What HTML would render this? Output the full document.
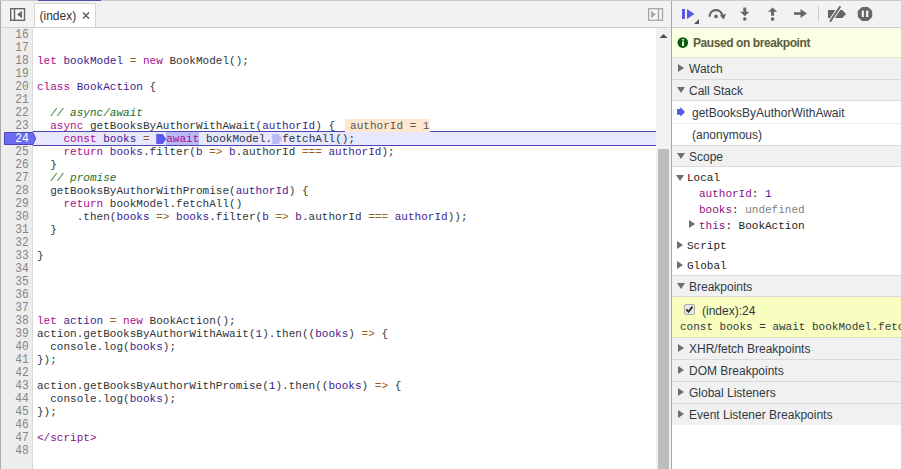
<!DOCTYPE html>
<html><head><meta charset="utf-8">
<style>
*{box-sizing:border-box;margin:0;padding:0}
html,body{width:901px;height:469px;overflow:hidden;background:#fff;font-family:"Liberation Sans",sans-serif;}
.abs{position:absolute}
#topline{left:0;top:0;width:901px;height:1px;background:#cacaca}
#topblue{left:38px;top:0;width:63px;height:1px;background:#4d53ac}
#leftb{left:0;top:0;width:1px;height:469px;background:#ababab}
#tb{left:1px;top:1px;width:670px;height:27px;background:#f2f2f2;border-bottom:1px solid #cdcdcd}
#tab{left:34px;top:3px;width:62px;height:24px;background:#fff;border:1px solid #d6d6d6;border-bottom:none}
#tabtxt{left:39.5px;top:9px;font-size:12px;color:#333}
#tabx{left:82px;top:8px;font-size:13px;color:#555}
#gutter{left:1px;top:28px;width:32px;height:441px;background:#ededed;border-right:1px solid #d8d8d8}
#code{left:37px;top:29px;letter-spacing:0.021px;font-family:"Liberation Mono",monospace;font-size:11px;line-height:13px;white-space:pre;color:#2f3337}
#nums{left:1px;top:29px;width:29px;font-family:"Liberation Mono",monospace;font-size:11px;line-height:12.2642px;transform:scaleY(1.06);transform-origin:0 0;text-align:right;color:#858585;white-space:pre}
#execline{left:33px;top:131px;width:623px;height:15px;background:#e7e7fd;border-top:1px solid #4c44b4;border-bottom:1px solid #4c44b4}
#execnum{left:4px;top:130px;width:29px;height:15px;background:#6b6bf0}
#sbtrack{left:656px;top:28px;width:15px;height:441px;background:#f1f1f1}
#sbthumb{left:658px;top:149px;width:11px;height:320px;background:#bdbdbd}
#divider{left:671px;top:0;width:1px;height:469px;background:#a8a8a8}
#side{left:671px;top:0;width:230px;height:469px;background:#fff}
.k{color:#aa0d91}.d{color:#3d2390}.o{color:#945c20}.aw{background:#b9b9f5;display:inline-block;height:13px;line-height:15px;vertical-align:top;position:relative;top:-1px}.iv{display:inline-block;margin-left:10px;padding-left:5px;background:#fde8cf;color:#575757;height:13px;line-height:15px;vertical-align:top;position:relative;top:-1px;z-index:2}.c{color:#236e25;font-style:italic}.n{color:#30188f}.t{color:#881280}
.sec{position:absolute;left:671px;width:230px;height:22px;background:#f1f1f1;border-bottom:1px solid #dadada;font-size:12px;color:#303942}
.sec .tri{position:absolute;left:7px;top:6px;width:0;height:0}
.sec .tri.td{top:7px;left:6px}
.tr{border-left:6.5px solid #6e6e6e;border-top:4px solid transparent;border-bottom:4px solid transparent}
.td{border-top:6px solid #6e6e6e;border-left:4px solid transparent;border-right:4px solid transparent}
.sec span{position:absolute;left:18px;top:4px}
.mk1{display:inline-block;width:10px;height:10px;vertical-align:top;margin-top:1px;background:#5a5af2;clip-path:polygon(0 0,65% 0,100% 50%,65% 100%,0 100%)}
.mk2{display:inline-block;width:10px;height:10px;vertical-align:top;margin-top:1px;background:#b9b9f6;clip-path:polygon(0 0,65% 0,100% 50%,65% 100%,0 100%)}
.mono{font-family:"Liberation Mono",monospace;font-size:11px}
</style></head><body>
<div class="abs" id="tb"></div>
<div class="abs" id="leftb"></div>
<div class="abs" id="tab"></div>
<div class="abs" id="tabtxt">(index)</div>
<svg class="abs" style="left:80px;top:10px" width="12" height="12"><path d="M3,2.5 L9,8.5 M9,2.5 L3,8.5" stroke="#5a5a5a" stroke-width="1.4" fill="none"/></svg>
<svg class="abs" style="left:0;top:0" width="670" height="27">
 <rect x="10.7" y="8.7" width="13.8" height="11.6" fill="#f9f9f9" stroke="#666" stroke-width="1.4"/>
 <line x1="14.5" y1="8.5" x2="14.5" y2="21" stroke="#666" stroke-width="1.5"/>
 <polygon points="17,14.5 22,10.8 22,18.2" fill="#666"/>
 <rect x="648.7" y="8.7" width="13.8" height="11.6" fill="#f9f9f9" stroke="#aaa" stroke-width="1.4"/>
 <line x1="658.5" y1="8.5" x2="658.5" y2="21" stroke="#aaa" stroke-width="1.5"/>
 <polygon points="651,10.8 651,18.2 656,14.5" fill="#aaa"/>
</svg>
<div class="abs" id="gutter"></div>
<div class="abs" id="sbtrack"></div>
<div class="abs" id="sbthumb"></div>
<svg class="abs" style="left:656px;top:28px" width="15" height="15"><polygon points="3.5,10 7.5,6 11.5,10" fill="#505050"/></svg>
<div class="abs" id="execline"></div>
<svg class="abs" style="left:0;top:131px" width="40" height="16"><polygon points="4.5,1.5 33,1.5 35.6,7.5 33,13.5 4.5,13.5" fill="#6b6bf5" stroke="#4d46bb" stroke-width="1"/></svg>
<svg class="abs" style="left:0;top:0" width="34" height="469" font-family="Liberation Mono" font-size="11.2" text-anchor="end"><g transform="scale(1,1.09)"><text x="28.6" y="34.862" fill="#858585">16</text><text x="28.6" y="46.789" fill="#858585">17</text><text x="28.6" y="58.716" fill="#858585">18</text><text x="28.6" y="70.642" fill="#858585">19</text><text x="28.6" y="82.569" fill="#858585">20</text><text x="28.6" y="94.495" fill="#858585">21</text><text x="28.6" y="106.422" fill="#858585">22</text><text x="28.6" y="118.349" fill="#858585">23</text><text x="28.6" y="130.275" fill="#fff">24</text><text x="28.6" y="142.202" fill="#858585">25</text><text x="28.6" y="154.128" fill="#858585">26</text><text x="28.6" y="166.055" fill="#858585">27</text><text x="28.6" y="177.982" fill="#858585">28</text><text x="28.6" y="189.908" fill="#858585">29</text><text x="28.6" y="201.835" fill="#858585">30</text><text x="28.6" y="213.761" fill="#858585">31</text><text x="28.6" y="225.688" fill="#858585">32</text><text x="28.6" y="237.615" fill="#858585">33</text><text x="28.6" y="249.541" fill="#858585">34</text><text x="28.6" y="261.468" fill="#858585">35</text><text x="28.6" y="273.394" fill="#858585">36</text><text x="28.6" y="285.321" fill="#858585">37</text><text x="28.6" y="297.248" fill="#858585">38</text><text x="28.6" y="309.174" fill="#858585">39</text><text x="28.6" y="321.101" fill="#858585">40</text><text x="28.6" y="333.028" fill="#858585">41</text><text x="28.6" y="344.954" fill="#858585">42</text><text x="28.6" y="356.881" fill="#858585">43</text><text x="28.6" y="368.807" fill="#858585">44</text><text x="28.6" y="380.734" fill="#858585">45</text><text x="28.6" y="392.661" fill="#858585">46</text><text x="28.6" y="404.587" fill="#858585">47</text><text x="28.6" y="416.514" fill="#858585">48</text></g></svg>
<div class="abs" id="code">

<span class="k">let</span> <span class="d">bookModel</span> <span class="o">=</span> <span class="k">new</span> BookModel();

<span class="k">class</span> <span class="d">BookAction</span> {

  <span class="c">// async/await</span>
  <span class="k">async</span> getBooksByAuthorWithAwait(<span class="d">authorId</span>) {<span class="iv">authorId = 1</span>
    <span class="k">const</span> <span class="d">books</span> <span class="o">=</span> <span class="mk1"></span><span class="k aw">await</span> bookModel.<span class="mk2"></span>fetchAll();
    <span class="k">return</span> <span class="d">books</span>.filter(<span class="d">b</span> <span class="o">=&gt;</span> <span class="d">b</span>.authorId <span class="o">===</span> <span class="d">authorId</span>);
  }
  <span class="c">// promise</span>
  getBooksByAuthorWithPromise(<span class="d">authorId</span>) {
    <span class="k">return</span> bookModel.fetchAll()
      .then(<span class="d">books</span> <span class="o">=&gt;</span> <span class="d">books</span>.filter(<span class="d">b</span> <span class="o">=&gt;</span> <span class="d">b</span>.authorId <span class="o">===</span> <span class="d">authorId</span>));
  }

}




<span class="k">let</span> <span class="d">action</span> <span class="o">=</span> <span class="k">new</span> BookAction();
action.getBooksByAuthorWithAwait(<span class="n">1</span>).then((<span class="d">books</span>) <span class="o">=&gt;</span> {
  console.log(<span class="d">books</span>);
});

action.getBooksByAuthorWithPromise(<span class="n">1</span>).then((<span class="d">books</span>) <span class="o">=&gt;</span> {
  console.log(<span class="d">books</span>);
});

<span class="t">&lt;/script&gt;</span>
</div>


<div class="abs" id="side"></div>
<div class="abs" style="left:671px;top:0;width:230px;height:28px;background:#f2f2f2;border-bottom:1px solid #cdcdcd"></div>
<svg class="abs" style="left:671px;top:0" width="230" height="27">
 <g fill="#5a5ae8">
  <rect x="11" y="9" width="3" height="10"/>
  <polygon points="16,9 23.5,14 16,19"/>
 </g>
 <polygon points="23,24 28,19 28,24" fill="#555"/>
 <g fill="#666">
  <path d="M38.6,16.8 A6.4,6.4 0 0 1 51.2,15" fill="none" stroke="#666" stroke-width="2.3"/>
  <polygon points="48.8,15.6 55,13.8 52.8,19.6"/>
  <circle cx="45" cy="16.4" r="1.85"/>
  <rect x="72.3" y="7.6" width="3" height="5"/>
  <polygon points="69.2,11.8 78.4,11.8 73.8,16.2"/>
  <circle cx="73.8" cy="19" r="1.8"/>
  <polygon points="97,11.8 106.3,11.8 101.6,7.4"/>
  <rect x="100.1" y="11" width="3" height="4.8"/>
  <circle cx="101.6" cy="19.1" r="1.8"/>
  <rect x="123" y="12.2" width="8" height="2.6"/>
  <polygon points="129.5,9 136,13.5 129.5,18"/>
 </g>
 <rect x="147" y="6" width="1" height="16" fill="#cfcfcf"/>
 <g fill="#666">
  <polygon points="157,10 171.3,10 175,14 171.3,18 157,18"/>
 </g>
 <line x1="159" y1="21.6" x2="169.4" y2="6.2" stroke="#f2f2f2" stroke-width="4"/>
 <line x1="159" y1="21.6" x2="169.4" y2="6.2" stroke="#666" stroke-width="1.9"/>
 <polygon points="191,6.9 197,6.9 201.2,11.1 201.2,16.9 197,21.1 191,21.1 186.8,16.9 186.8,11.1" fill="#666"/>
 <rect x="190.8" y="10.6" width="2" height="6.4" fill="#fff"/>
 <rect x="195.2" y="10.6" width="2" height="6.4" fill="#fff"/>
</svg>
<div class="abs" style="left:671px;top:28px;width:230px;height:30px;background:#fbffe3;border-bottom:1px solid #e0e2cc"></div>
<svg class="abs" style="left:671px;top:29px" width="30" height="30"><circle cx="11.8" cy="13.6" r="5.3" fill="#0b5b0b"/><rect x="11.1" y="12.5" width="1.8" height="4.5" fill="#fff"/><rect x="11.1" y="10" width="1.8" height="1.6" fill="#fff"/></svg>
<div class="abs" style="left:693px;top:36px;font-size:12px;font-weight:bold;letter-spacing:-0.42px;color:#5b5b3d">Paused on breakpoint</div>

<div class="sec" style="top:58px"><i class="tri tr"></i><span>Watch</span></div>
<div class="sec" style="top:80px;height:21px"><i class="tri td"></i><span>Call Stack</span></div>
<div class="abs" style="left:671px;top:101px;width:230px;height:23px;border-bottom:1px solid #ececec"></div>
<svg class="abs" style="left:671px;top:102px" width="20" height="22"><polygon points="6,7 9.3,7 9.3,5 14,9.9 9.3,14.7 9.3,12.8 6,12.8" fill="#5757e6"/></svg>
<div class="abs" style="left:692px;top:106px;font-size:12px;color:#303942">getBooksByAuthorWithAwait</div>
<div class="abs" style="left:671px;top:124px;width:230px;height:22px;border-bottom:1px solid #dadada"></div>
<div class="abs" style="left:692px;top:128px;font-size:12px;color:#303942">(anonymous)</div>
<div class="sec" style="top:146px;height:21px"><i class="tri td"></i><span>Scope</span></div>

<div class="abs mono" style="left:670px;top:168px;width:230px;line-height:16px;color:#222">
<i class="abs td" style="left:6px;top:7px"></i><div class="abs" style="left:17px;top:2px;white-space:pre">Local</div>
<div class="abs" style="left:29px;top:18px;white-space:pre"><span class="t">authorId</span>: <span class="n">1</span></div>
<div class="abs" style="left:29px;top:34px;white-space:pre"><span class="t">books</span>: <span style="color:#808080">undefined</span></div>
<i class="abs tr" style="left:19px;top:52px"></i><div class="abs" style="left:29px;top:50px;white-space:pre"><span class="t">this</span>: BookAction</div>
<i class="abs tr" style="left:7px;top:73px"></i><div class="abs" style="left:17px;top:70px;white-space:pre">Script</div>
<i class="abs tr" style="left:7px;top:93px"></i><div class="abs" style="left:17px;top:90px;white-space:pre">Global</div>
</div>

<div class="sec" style="top:275px;border-top:1px solid #dadada;height:22px"><i class="tri td"></i><span>Breakpoints</span></div>
<div class="abs" style="left:671px;top:297px;width:230px;height:41px;background:#f8fdc0;border-bottom:1px solid #dcdfc0"></div>
<div class="abs" style="left:684px;top:304px;width:11px;height:11px;border:1px solid #a8a8a8;border-radius:2px;background:#ececec"></div>
<svg class="abs" style="left:684px;top:304px" width="11" height="11"><path d="M2.3,5.3 L4.5,7.8 L8.5,2.6" fill="none" stroke="#333" stroke-width="2"/></svg>
<div class="abs" style="left:702px;top:304px;font-size:12px;color:#303942">(index):24</div>
<div class="abs mono" style="left:680px;top:321px;white-space:pre;color:#303942">const books = await bookModel.fetchAll();</div>

<div class="sec" style="top:338px"><i class="tri tr"></i><span>XHR/fetch Breakpoints</span></div>
<div class="sec" style="top:360px"><i class="tri tr"></i><span>DOM Breakpoints</span></div>
<div class="sec" style="top:382px"><i class="tri tr"></i><span>Global Listeners</span></div>
<div class="sec" style="top:404px;border-bottom:none;height:21px"><i class="tri tr"></i><span>Event Listener Breakpoints</span></div>
<div class="abs" id="divider"></div>
<div class="abs" id="topline"></div>
<div class="abs" id="topblue"></div>
</body></html>
